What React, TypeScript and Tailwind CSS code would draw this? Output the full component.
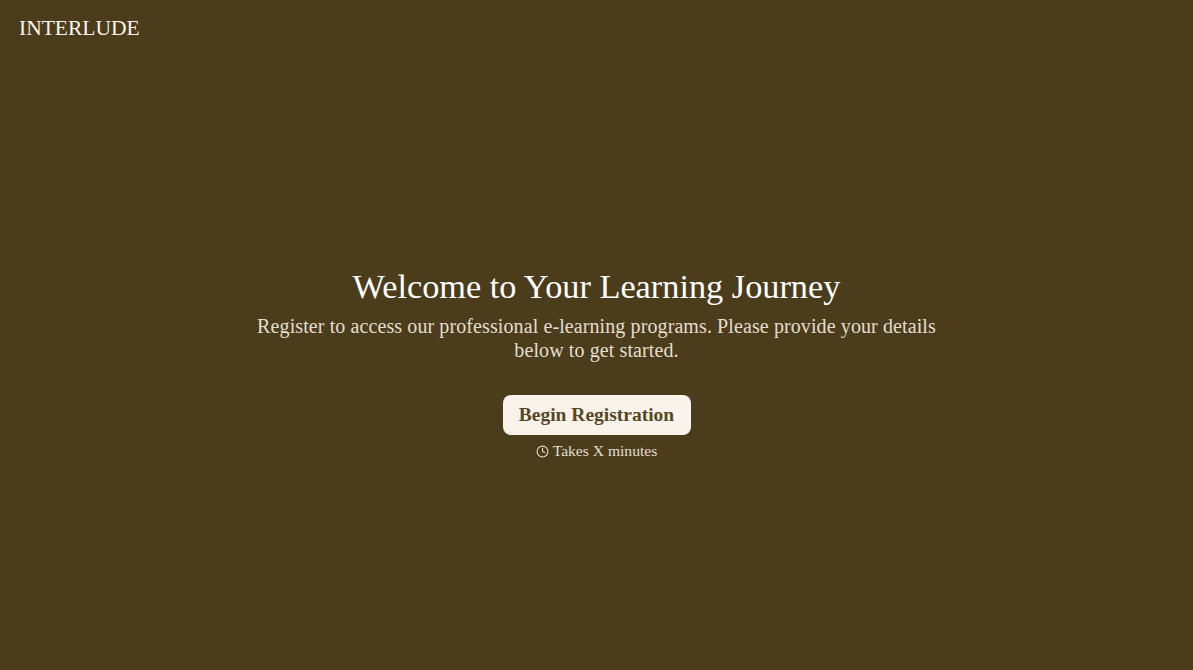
import { Clock } from 'lucide-react';

const serif = "font-['Liberation_Serif',serif]";

export default function App() {
  return (
    <div className={`flex min-h-screen flex-col bg-[#4b3d1b] ${serif}`}>
      <header className="px-[19px] pt-[14px]">
        <div className="text-[21.5px] leading-[28px] text-[#faf5ee]">INTERLUDE</div>
      </header>

      <main className="flex flex-1 flex-col items-center pt-[224px]">
        <h1 className="text-[34.3px] leading-[40px] text-white">Welcome to Your Learning Journey</h1>
        <p className="mt-[8px] w-[690px] text-center text-[20px] leading-[24px] tracking-[0.1px] text-[#e3ddd0]">
          Register to access our professional e-learning programs. Please provide your details below to get started.
        </p>
        <button className="mt-[33px] h-[40px] w-[188px] rounded-lg bg-[#faf3eb] text-[19.5px] font-bold text-[#574825]">
          Begin Registration
        </button>
        <div className="mt-[6px] flex items-center gap-1 text-[15.6px] leading-[20px] text-[#e3ddd0]">
          <Clock size={13} strokeWidth={2} />
          <span>Takes X minutes</span>
        </div>
      </main>
    </div>
  );
}
